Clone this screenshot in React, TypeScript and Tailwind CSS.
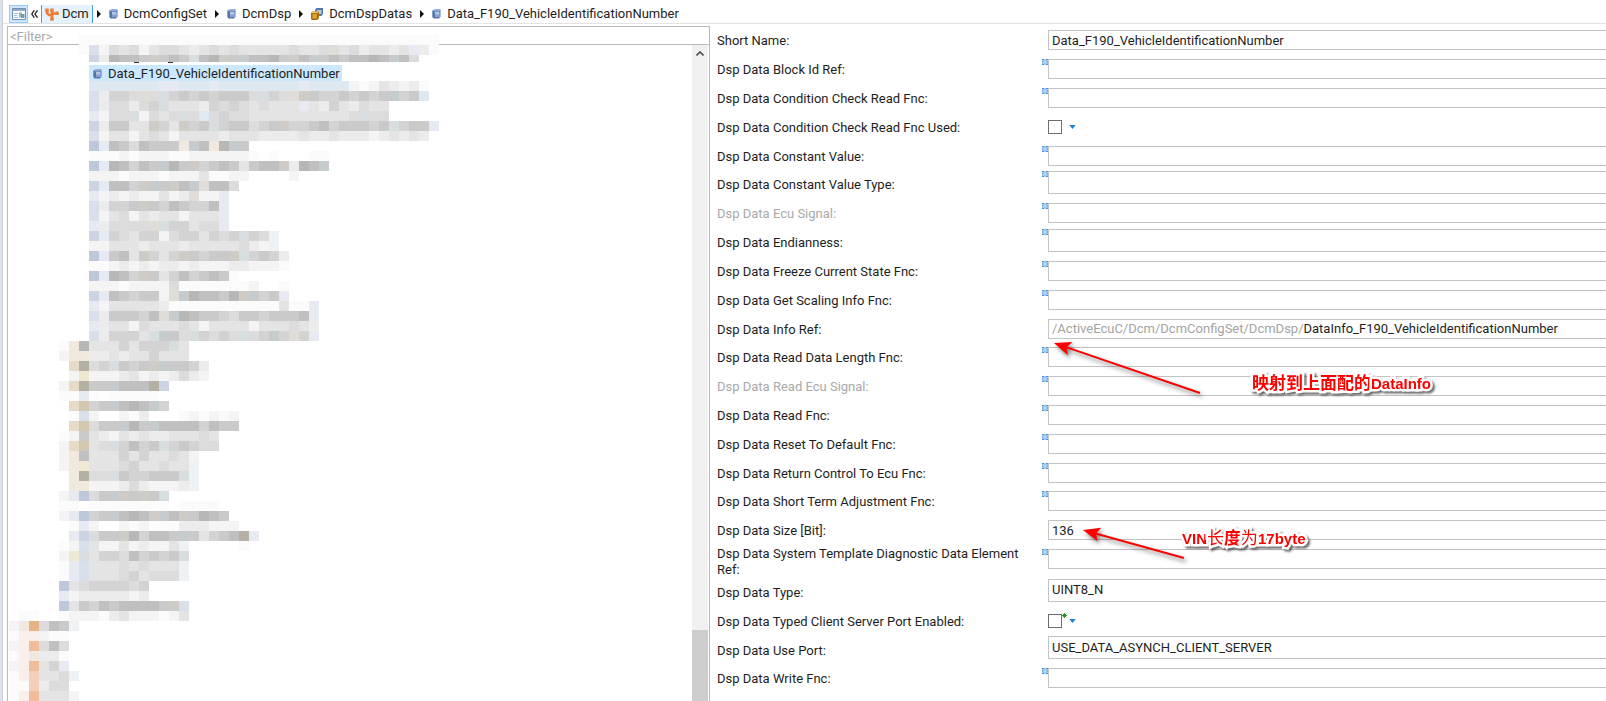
import React from "react";

type Kind = "text" | "combo" | "check" | "ref";

interface Field {
  label: string;
  kind?: Kind;
  value?: string;
  path?: string;
  disabled?: boolean;
  unset?: boolean;
  userSet?: boolean;
  tall?: boolean;
}

const fields: Field[] = [
  { label: "Short Name:", value: "Data_F190_VehicleIdentificationNumber" },
  { label: "Dsp Data Block Id Ref:", unset: true },
  { label: "Dsp Data Condition Check Read Fnc:", unset: true },
  { label: "Dsp Data Condition Check Read Fnc Used:", kind: "check" },
  { label: "Dsp Data Constant Value:", unset: true },
  { label: "Dsp Data Constant Value Type:", kind: "combo", unset: true },
  { label: "Dsp Data Ecu Signal:", unset: true, disabled: true },
  { label: "Dsp Data Endianness:", kind: "combo", unset: true },
  { label: "Dsp Data Freeze Current State Fnc:", unset: true },
  { label: "Dsp Data Get Scaling Info Fnc:", unset: true },
  {
    label: "Dsp Data Info Ref:",
    kind: "ref",
    path: "/ActiveEcuC/Dcm/DcmConfigSet/DcmDsp/",
    value: "DataInfo_F190_VehicleIdentificationNumber",
  },
  { label: "Dsp Data Read Data Length Fnc:", unset: true },
  { label: "Dsp Data Read Ecu Signal:", unset: true, disabled: true },
  { label: "Dsp Data Read Fnc:", unset: true },
  { label: "Dsp Data Reset To Default Fnc:", unset: true },
  { label: "Dsp Data Return Control To Ecu Fnc:", unset: true },
  { label: "Dsp Data Short Term Adjustment Fnc:", unset: true },
  { label: "Dsp Data Size [Bit]:", value: "136" },
  {
    label: "Dsp Data System Template Diagnostic Data Element Ref:",
    unset: true,
    tall: true,
  },
  { label: "Dsp Data Type:", kind: "combo", value: "UINT8_N" },
  {
    label: "Dsp Data Typed Client Server Port Enabled:",
    kind: "check",
    userSet: true,
  },
  {
    label: "Dsp Data Use Port:",
    kind: "combo",
    value: "USE_DATA_ASYNCH_CLIENT_SERVER",
  },
  { label: "Dsp Data Write Fnc:", unset: true },
];

// one letter per 10px block of the pixelated tree entries
const palette: Record<string, string> = {
  a: "#fbfbfb",
  b: "#f4f4f4",
  c: "#ececec",
  d: "#e4e4e4",
  e: "#dcdcdc",
  f: "#d3d3d3",
  g: "#cacaca",
  h: "#c0c0c0",
  i: "#b7b7b6",
  w: "#e0ddd8",
  v: "#cfcbc6",
  x: "#d8dddf",
  y: "#c6cbce",
  z: "#eef2f5",
  B: "#bdc8dc",
  C: "#ccd4e3",
  D: "#dae0ea",
  E: "#e7eaf2",
  L: "#dde8f1",
  T: "#e6dbc7",
  U: "#f1e9df",
  V: "#b5b0a4",
  W: "#d3c8af",
  Y: "#efe8d2",
  O: "#e6b384",
  P: "#f0bc9c",
  Q: "#f4d0bc",
  R: "#faefea",
};

// [top, first column, blocks]
const blocks: [number, number, string][] = [
  [35, 7, "aaaaaaaaaaaaaaaaaaaaaaaaaaaaaaaaaaaa"],
  [45, 7, "aDbedebdeedcdededddddeddewdecddcdEca"],
  [55, 8, "Ccihhgvghgxhivgyhhigvhyghghhihyhe"],
  [81, 8, "LLLLLLLEELLLELLLLLLLLELLLLbabdcbca"],
  [91, 8, "DcffewexfgfgfgggexfewvgffgfgfgyfgL"],
  [101, 8, "DceecefxdddcfefededddEdcfdcedd"],
  [111, 8, "EbeexbedexeLefeeddddddddddexee"],
  [121, 8, "CcggddvfdvfgxfggefgvffghfgggfgxfggE"],
  [131, 8, "DbddbdedbddddcdddccccdccdcccbcdcdcA"],
  [141, 8, "BEhgehgggUyhUiyg"],
  [151, 8, "aaababbbaabbbbbba.a...aa"],
  [161, 8, "BEihfhgyigvfghgdghhvcihy"],
  [171, 8, "bbbabbbabbbdaabb....b"],
  [181, 8, "CEhhfvygvhywhhe"],
  [191, 8, "EbcbcbbdbcwbbE"],
  [201, 8, "DcffgvgfhgffhE"],
  [211, 8, "DbdebdcddbdddE"],
  [221, 8, "EceeeewxffdeeE"],
  [231, 8, "CEfedffbeffdfefxfez"],
  [241, 8, "bbdddcdddcdddddecbz"],
  [251, 8, "BEghdvfdfvgfggvxfgfc"],
  [261, 8, "aabcbcbccbcbbbccbbba"],
  [271, 8, "BEihfvgdfhfghga"],
  [281, 8, "bbbabbbbeaaaaaaab..a"],
  [291, 8, "CEhgfggbwyihhgivyfgE"],
  [301, 8, "EbdddddcaaaaaaaaaaadaaE"],
  [311, 8, "DcgggfhwyihggfeggfggghE"],
  [321, 8, "Ecddbedddedbddddbdddedc"],
  [331, 8, "DcfffdxygexfefexefyfwfE"],
  [341, 5, "aUidddfdfffxd"],
  [351, 5, "bUUccdcddfddd"],
  [361, 6, "TVefxgfgvyggfc"],
  [371, 6, "bYbbbcdbcbcecb"],
  [381, 5, "bTVggyhhhVC"],
  [391, 5, "aaEa.aaaaa"],
  [401, 6, "TWfgyhihyf"],
  [411, 6, "aDb..bac...ababab"],
  [421, 6, "TWeggyigyhhhhfhgg"],
  [431, 5, "abgdcbdcdccddded"],
  [441, 5, "bTWdexfhfgxfgfee"],
  [451, 5, "bUhdddfdfddedb"],
  [461, 5, "bUYdddefddeddz"],
  [471, 6, "UVeexgffgggxz"],
  [481, 6, "UUbbbcecbbbcz"],
  [491, 5, "bEBegyvgvgx"],
  [501, 5, "aa.aaaaaaaa.aaaa"],
  [511, 5, "bEBfgyhihvyhvgihg"],
  [521, 6, "aEb..babaaacccbbb"],
  [531, 6, "ECeggvifhhgygdfghVE"],
  [541, 5, "abDdbbdbcbbdz.....a"],
  [551, 5, "bYxdffehfgfgx"],
  [561, 5, "aEDdddededddz"],
  [571, 5, "aEDdddefdeeez"],
  [581, 5, "Bdeffffef"],
  [591, 5, "Ebcccccbc"],
  [601, 5, "BdgfhghhhhgvD"],
  [611, 1, "aa..abbbacdbbbabd"],
  [621, 0, "bUOehgz"],
  [631, 0, "aRRbaa"],
  [641, 0, "bRPehe"],
  [651, 0, "aRUcca"],
  [661, 0, "bRPdfE"],
  [671, 0, "aRQddez"],
  [681, 0, "aaQcee"],
  [691, 0, "aRPdddb"],
];

function Pixelated() {
  return (
    <svg
      className="pointer-events-none absolute left-px top-0"
      width="460"
      height="674"
      viewBox="9 27 460 674"
      shapeRendering="crispEdges"
      aria-hidden="true"
    >
      {blocks.map(([y, col, cells]) =>
        cells
          .split("")
          .map((c, i) =>
            palette[c] ? (
              <rect
                key={`${y}-${i}`}
                x={9 + (col + i) * 10}
                y={y}
                width="10"
                height={y === 55 ? 7 : 10}
                fill={palette[c]}
              />
            ) : null
          )
      )}
      <path d="M134 62h5M168 62h5" stroke="#333" strokeWidth="1" />
    </svg>
  );
}

function CubeIcon() {
  return (
    <svg width="9" height="10" viewBox="0 0 9 10" className="shrink-0">
      <path d="M.3 1.500 2.500.5h6v7L7 9.500H1.500L.3 8z" fill="#5575ad" />
      <path d="M.5 1.500 2.500.5h6L7.500 2.500h-5z" fill="#8fabd4" />
      <path d="M3 3h4.500v5H3z" fill="#b3c7e4" />
      <path d="M3 5.500h4.500v2.500H3z" fill="#84a2ce" />
    </svg>
  );
}

function CubesIcon() {
  return (
    <svg width="12" height="12" viewBox="0 0 12 12" className="shrink-0">
      <path d="M4 1.500 5.500 0H12v6l-1.500 2H4z" fill="#5575ad" />
      <path d="M6 2h4.500v4H6z" fill="#b7cbe7" />
      <path d="M0 5l1.500-1.500H8V10l-1.500 2H1L0 11z" fill="#a86e0c" />
      <path d="M0 5l1.500-1.500H8L6.500 5z" fill="#f0cb6b" />
      <path d="M1.500 6H6v4.500H1.500z" fill="#d9a032" />
    </svg>
  );
}

function FormIcon() {
  return (
    <svg width="14" height="12" viewBox="0 0 14 12">
      <path d="M.5.5h13v11H.5z" fill="#fff" stroke="#6d8fb5" />
      <path d="M1 1h12v2H1z" fill="#8fabc9" />
      <path d="M2 5.500h4M2 7.500h3M2 9.500h4" stroke="#9dbbdc" />
      <path d="M7 4.500h3v5H7z" fill="#8fc08f" />
      <path d="M9 6h3.500v4H9z" fill="#6f96c6" />
    </svg>
  );
}

function ForkIcon() {
  return (
    <svg width="14" height="13" viewBox="0 0 14 13">
      <path
        d="M2 2v3l2 2h3l2-1.500h3M7 2v10"
        fill="none"
        stroke="#ec7a34"
        strokeWidth="2.600"
      />
      <path
        d="M.3.5h3.400v3.500H.3zM5.300.5h3.400v3.500H5.300zM10.500 3.500h3.200v3.500h-3.200zM5.300 9.300h3.400v3.400H5.300z"
        fill="#ee7f3a"
      />
    </svg>
  );
}

function Chevron() {
  return (
    <svg width="4" height="8" viewBox="0 0 4 8" className="shrink-0">
      <path d="M0 0l4 4-4 4z" fill="#111" />
    </svg>
  );
}

function Crumb({
  icon,
  children,
}: {
  icon: React.ReactNode;
  children: React.ReactNode;
}) {
  return (
    <a href="#" className="flex items-center gap-[6px] whitespace-nowrap">
      {icon}
      {children}
    </a>
  );
}

function Breadcrumb() {
  return (
    <nav className="flex h-6 shrink-0 items-center gap-2 border-b border-[#e4e4e4] pl-[6px] pt-[5px]">
      <div className="flex items-center gap-[3px]">
        <button
          aria-label="Form view"
          className="flex h-[18px] w-[19px] items-center justify-center border border-[#99ccf5] bg-[#cfe6fa]"
        >
          <FormIcon />
        </button>
        <button aria-label="Back" className="w-[7px]">
          <svg width="7" height="8" viewBox="0 0 7 8">
            <path
              d="M3.300.3.8 4l2.500 3.700M6.500.3 4 4l2.500 3.700"
              fill="none"
              stroke="#222"
              strokeWidth="1.300"
            />
          </svg>
        </button>
        <a
          href="#"
          className="flex h-[18px] items-center gap-[3px] border-x border-[#4aa0e4] bg-[#e5f1fb] px-[3px]"
        >
          <ForkIcon />
          Dcm
        </a>
        <span className="pl-px">
          <Chevron />
        </span>
      </div>
      <Crumb icon={<CubeIcon />}>DcmConfigSet</Crumb>
      <Chevron />
      <Crumb icon={<CubeIcon />}>DcmDsp</Crumb>
      <Chevron />
      <Crumb icon={<CubesIcon />}>DcmDspDatas</Crumb>
      <Chevron />
      <Crumb icon={<CubeIcon />}>Data_F190_VehicleIdentificationNumber</Crumb>
    </nav>
  );
}

function TreePanel() {
  return (
    <section className="relative flex w-[703px] shrink-0 flex-col overflow-hidden border-x border-t border-[#b9b9b9]">
      <input
        aria-label="Filter"
        placeholder="<Filter>"
        className="h-[18px] w-full shrink-0 border-b border-[#b9b9b9] pl-[2px] pt-[2px] outline-none placeholder:text-[#a9a9a9]"
      />
      <div className="flex min-h-0 flex-1">
        <div className="min-w-0 flex-1 pl-[81px] pt-5">
          <button className="flex h-[17px] items-center gap-[6px] bg-[#cce8ff] pl-[4px] pr-[2px]">
            <CubeIcon />
            Data_F190_VehicleIdentificationNumber
          </button>
        </div>
        <div className="mr-px flex w-[16px] flex-col justify-between bg-[#f0f0f0]">
          <button aria-label="Scroll up" className="flex h-4 items-center justify-center">
            <svg width="8" height="5" viewBox="0 0 8 5">
              <path d="M.5 4.500 4 1l3.500 3.500" fill="none" stroke="#505050" strokeWidth="1.600" />
            </svg>
          </button>
          <div className="h-[71px] bg-[#cdcdcd]" />
        </div>
      </div>
      <Pixelated />
    </section>
  );
}

function UnsetMark() {
  return (
    <svg width="6" height="6" viewBox="0 0 6 6" shapeRendering="crispEdges">
      <path d="M0 0h6v6H0z" fill="#9cc8f2" />
      <path d="M0 0h2v1H0zM4 0h2v1H4zM0 5h2v1H0zM4 5h2v1H4z" fill="#4f94d8" />
      <path d="M0 2h1v2H0zM5 2h1v2H5z" fill="#78b0e6" />
      <path d="M2 2h2v2H2z" fill="#b8d8f6" />
    </svg>
  );
}

const box = "w-full border-y border-l border-[#c3c3c6] bg-white pl-[3px] outline-none";

function Control({ field, id }: { field: Field; id: string }) {
  if (field.kind === "check")
    return (
      <div className="flex items-center">
        <input
          id={id}
          type="checkbox"
          className="h-[14px] w-[14px] appearance-none border border-[#6e6e6e] bg-white"
        />
        <span className="h-[14px] w-[7px]">
          {field.userSet && (
            <svg width="5" height="5" viewBox="0 0 5 5" className="-mt-px">
              <path d="M2.500 0v5M0 2.500h5M.7.7l3.600 3.600M4.300.7.7 4.300" stroke="#2f8f2f" />
            </svg>
          )}
        </span>
        <button aria-label="Options">
          <svg width="7" height="4" viewBox="0 0 7 4">
            <path d="M.3 0h6.400L3.500 4z" fill="#1583dc" />
          </svg>
        </button>
      </div>
    );
  if (field.kind === "combo")
    return (
      <select id={id} className={`${box} h-[23px] appearance-none`}>
        <option>{field.value ?? ""}</option>
      </select>
    );
  if (field.kind === "ref")
    return (
      <div className={`${box} flex h-[20px] items-center`}>
        <span className="text-[#a3a3a3]">{field.path}</span>
        <input
          id={id}
          defaultValue={field.value}
          className="min-w-0 flex-1 outline-none"
        />
      </div>
    );
  return (
    <input
      id={id}
      defaultValue={field.value}
      disabled={field.disabled}
      className={`${box} h-[20px]`}
    />
  );
}

function FieldRow({ field, id }: { field: Field; id: string }) {
  return (
    <div className={`flex items-center ${field.tall ? "h-[33px]" : "flex-1"}`}>
      <label
        htmlFor={id}
        className={`w-[325px] shrink-0 pr-4 pt-[2px] leading-4 ${
          field.disabled ? "text-[#a9a9a9]" : ""
        }`}
      >
        {field.label}
      </label>
      <div
        className={`flex min-w-0 flex-1 ${
          field.kind === "combo" || field.tall ? "pb-1" : ""
        }`}
      >
        <span className="w-[6px] shrink-0">{field.unset && <UnsetMark />}</span>
        <div className="min-w-0 flex-1">
          <Control field={field} id={id} />
        </div>
      </div>
    </div>
  );
}

function Arrow({ dx, dy }: { dx: number; dy: number }) {
  const angle = (Math.atan2(dy, dx) * 180) / Math.PI;
  const len = Math.hypot(dx, dy);
  return (
    <svg
      width={dx + 12}
      height={dy + 20}
      viewBox={`-2 -10 ${dx + 12} ${dy + 20}`}
      className="drop-shadow-[2px_3px_2px_rgba(0,0,0,0.5)]"
      aria-hidden="true"
    >
      <g transform={`rotate(${angle})`} fill="#fe0000">
        <path d="M0 0 17-7 14-1v2l3 6z" />
        <path d={`M12-1H${len}v2H12z`} />
      </g>
    </svg>
  );
}

const note =
  "absolute whitespace-nowrap font-['Liberation_Sans','Noto_Sans_CJK_SC',sans-serif] text-[15px] leading-5 font-bold text-[#fe0000] [-webkit-text-stroke:5px_#fff] [paint-order:stroke_fill] drop-shadow-[2px_2px_1px_rgba(0,0,0,0.6)]";

export default function App() {
  return (
    <div className="flex h-screen overflow-hidden border-l-2 border-[#dbe3f3] bg-white font-[Roboto,sans-serif] text-[13px] leading-4 text-[#1e1e1e]">
      <div className="flex min-w-0 flex-1 flex-col border-l border-[#cfcfcf]">
        <Breadcrumb />
        <div className="flex min-h-0 flex-1 pl-[4px] pt-[2px]">
          <TreePanel />
          <form className="relative flex min-w-0 flex-1 flex-col pb-[8px] pl-[7px]">
            {fields.map((f, i) => (
              <FieldRow key={f.label} field={f} id={`field-${i}`} />
            ))}
            <div className="pointer-events-none absolute left-[342px] top-[307px]">
              <Arrow dx={146} dy={50} />
            </div>
            <div className={`${note} left-[542px] top-[348px]`}>
              <span className="text-[17px]">映射到上面配的</span>DataInfo
            </div>
            <div className="pointer-events-none absolute left-[371px] top-[494px]">
              <Arrow dx={101} dy={28} />
            </div>
            <div className={`${note} left-[472px] top-[503px]`}>
              VIN
              <span className="text-[17px]">
                <span className="font-normal">长</span>度
                <span className="font-normal">为</span>
              </span>
              17byte
            </div>
          </form>
        </div>
      </div>
    </div>
  );
}
